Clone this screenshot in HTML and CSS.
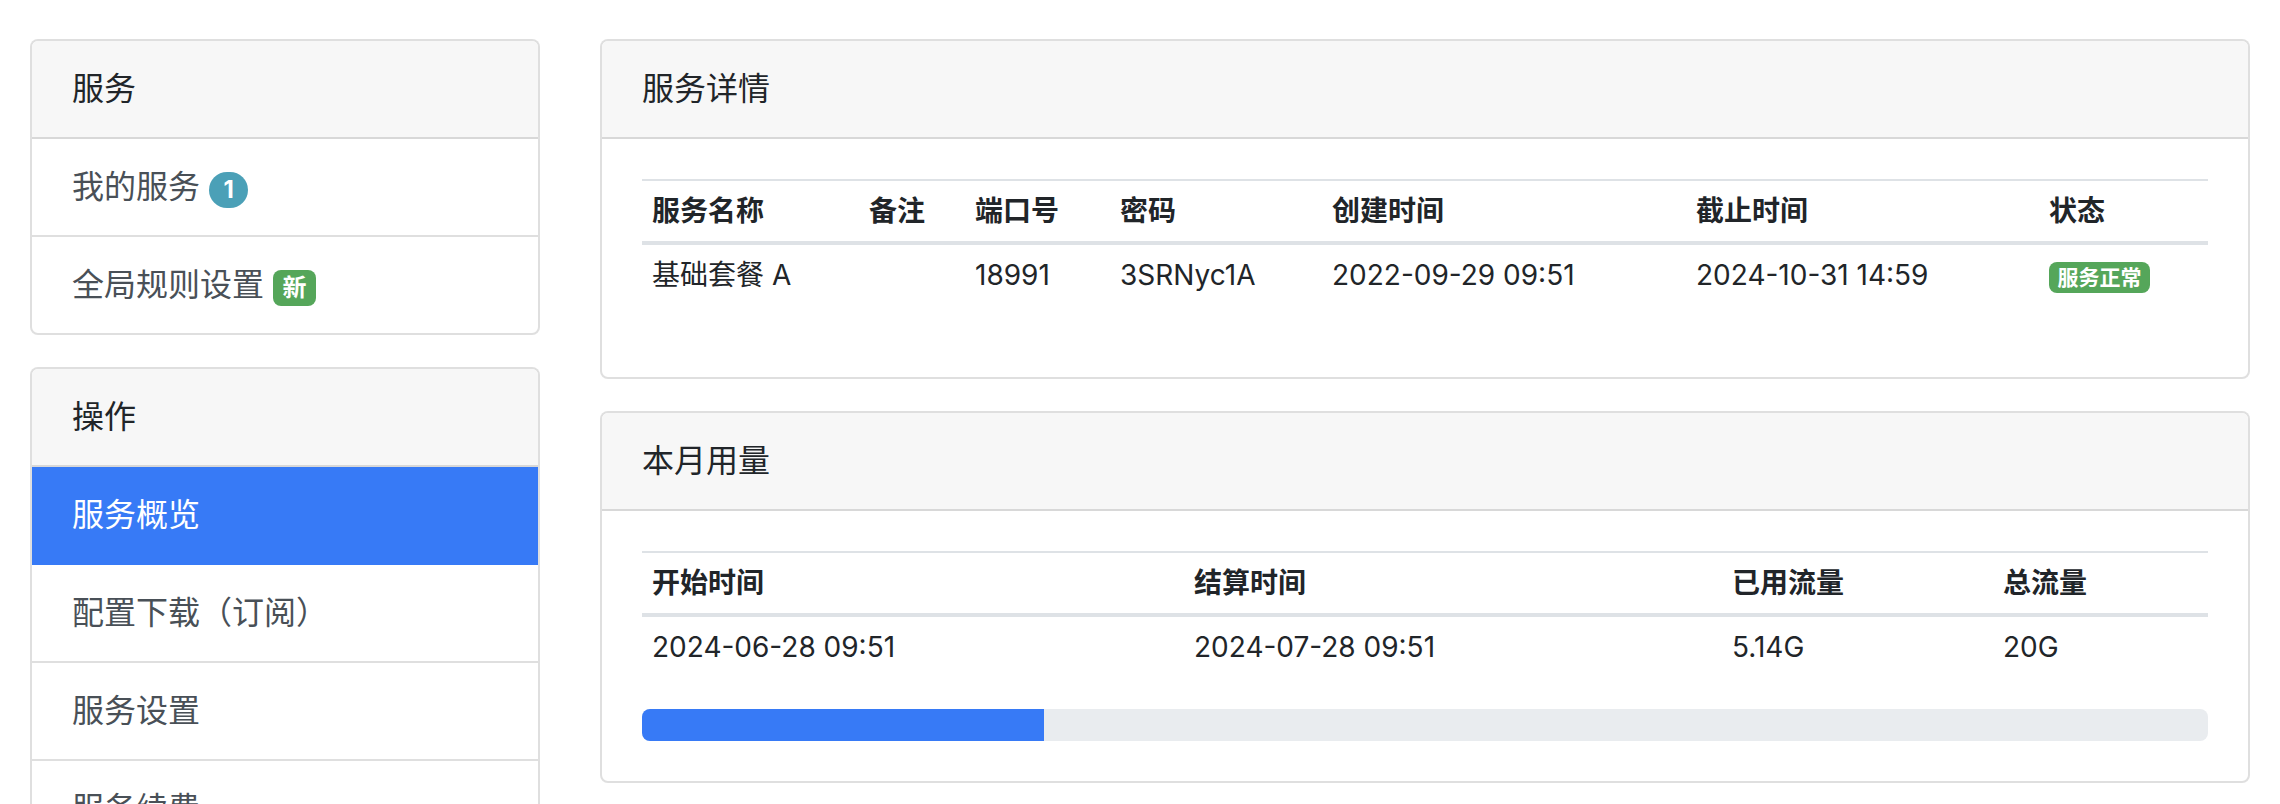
FILE: index.html
```html
<!DOCTYPE html>
<html lang="zh-CN">
<head>
<meta charset="utf-8">
<title>服务概览</title>
<link rel="stylesheet" href="styles.css">
</head>
<body>
<div class="page">
  <aside class="sidebar">
    <div class="card">
      <div class="card-header">服务</div>
      <ul class="list">
        <li class="list-item">我的服务 <span class="badge badge-pill badge-info">1</span></li>
        <li class="list-item">全局规则设置 <span class="badge badge-success">新</span></li>
      </ul>
    </div>
    <div class="card">
      <div class="card-header">操作</div>
      <ul class="list">
        <li class="list-item active">服务概览</li>
        <li class="list-item">配置下载（订阅）</li>
        <li class="list-item">服务设置</li>
        <li class="list-item">服务续费</li>
      </ul>
    </div>
  </aside>
  <main class="main">
    <section class="card">
      <div class="card-header">服务详情</div>
      <div class="card-body">
        <table class="table">
          <colgroup>
            <col class="w-name"><col class="w-note"><col class="w-port"><col class="w-pass"><col class="w-created"><col class="w-expire"><col>
          </colgroup>
          <thead>
            <tr><th>服务名称</th><th>备注</th><th>端口号</th><th>密码</th><th>创建时间</th><th>截止时间</th><th>状态</th></tr>
          </thead>
          <tbody>
            <tr><td>基础套餐 A</td><td></td><td>18991</td><td>3SRNyc1A</td><td>2022-09-29 09:51</td><td>2024-10-31 14:59</td><td><span class="badge badge-success">服务正常</span></td></tr>
          </tbody>
        </table>
      </div>
    </section>
    <section class="card">
      <div class="card-header">本月用量</div>
      <div class="card-body">
        <table class="table">
          <colgroup>
            <col class="w-start"><col class="w-settle"><col class="w-used"><col>
          </colgroup>
          <thead>
            <tr><th>开始时间</th><th>结算时间</th><th>已用流量</th><th>总流量</th></tr>
          </thead>
          <tbody>
            <tr><td>2024-06-28 09:51</td><td>2024-07-28 09:51</td><td>5.14G</td><td>20G</td></tr>
          </tbody>
        </table>
        <div class="progress"><div class="progress-bar" style="width: 25.7%"></div></div>
      </div>
    </section>
  </main>
</div>
</body>
</html>
```

FILE: styles.css
```css
html, body {
  margin: 0;
  padding: 0;
  overflow: hidden;
  background: #fff;
}
body {
  font-family: Inter, "Noto Sans CJK SC", sans-serif;
  font-size: 32px;
  line-height: 48px;
  color: #212529;
}
* { box-sizing: border-box; }

.page {
  display: flex;
  padding-top: 39px;
}
.sidebar {
  flex: 0 0 25%;
  padding: 0 30px;
}
.main {
  flex: 0 0 75%;
  padding: 0 30px;
}

.card {
  border: 2px solid rgba(0, 0, 0, 0.125);
  border-radius: 8px;
  background: #fff;
  margin-bottom: 32px;
  overflow: hidden;
}
.card-header {
  background: #f7f7f7;
  border-bottom: 2px solid rgba(0, 0, 0, 0.125);
  padding: 24px 40px;
  color: #212529;
}
.card-body {
  padding: 40px;
}

.list {
  list-style: none;
  margin: 0;
  padding: 0;
}
.list-item {
  padding: 24px 40px;
  color: #495057;
  border-bottom: 2px solid rgba(0, 0, 0, 0.125);
}
.list-item:last-child {
  border-bottom: 0;
}
.list-item.active {
  background: #377af6;
  border-bottom-color: #377af6;
  color: #fff;
}

.badge {
  display: inline-block;
  font-size: 24px;
  font-weight: 700;
  line-height: 1;
  padding: 6px 9.6px;
  border-radius: 8px;
  color: #fff;
  vertical-align: baseline;
  white-space: nowrap;
}
.badge-pill {
  padding: 6px 14.4px;
  border-radius: 160px;
}
.badge-info { background: #4ba0b7; }
.badge-success { background: #55a65a; }
.table .badge {
  font-size: 21px;
  padding: 5px 8.4px;
}

.table {
  width: 100%;
  border-collapse: collapse;
  table-layout: fixed;
  font-size: 28px;
  line-height: 42px;
  color: #212529;
  margin-bottom: 32px;
}
.table th, .table td {
  text-align: left;
  padding: 9px 10px;
  border-top: 2px solid #dee2e6;
  white-space: nowrap;
}
.table th {
  font-weight: 700;
}
.table thead th {
  border-bottom: 4px solid #dee2e6;
}

.w-name { width: 217px; }
.w-note { width: 106px; }
.w-port { width: 145px; }
.w-pass { width: 212px; }
.w-created { width: 364px; }
.w-expire { width: 353px; }
.w-start { width: 542px; }
.w-settle { width: 538px; }
.w-used { width: 271px; }

.progress {
  height: 32px;
  background: #e9ecef;
  border-radius: 8px;
  overflow: hidden;
  display: flex;
}
.progress-bar {
  background: #377af6;
  height: 100%;
}
```
